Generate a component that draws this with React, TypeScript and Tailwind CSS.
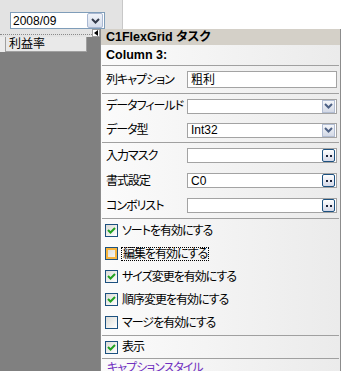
import React from "react";

const F = "font-['Liberation_Sans','Noto_Sans_CJK_JP',sans-serif] [font-feature-settings:'palt']";

function Sep() {
  return <div className="mx-[1px] h-px shrink-0 bg-[#a0a0a0]" />;
}

function Chevron({ color = "#4d6185" }: { color?: string }) {
  return (
    <svg width="9" height="6" viewBox="0 0 9 6">
      <path d="M1 1 L4.5 4.5 L8 1" stroke={color} strokeWidth="2" fill="none" />
    </svg>
  );
}

function DropBtn() {
  return (
    <div className="flex h-[13px] w-[13px] items-center justify-center border border-[#b2bdd2] bg-gradient-to-b from-[#f4f6fa] to-[#d3d9e6]">
      <Chevron />
    </div>
  );
}

function EllBtn() {
  return (
    <div className="flex h-[13px] w-[13px] items-center justify-center gap-[2px] rounded-[2px] border border-[#1c5180] bg-gradient-to-b from-white to-[#d5d9e8]">
      <span className="h-[2px] w-[2px] bg-[#1a2238]" />
      <span className="h-[2px] w-[2px] bg-[#1a2238]" />
    </div>
  );
}

function Field({ text, btn }: { text?: string; btn?: "drop" | "ell" }) {
  return (
    <div className="flex h-[15px] w-[150px] items-center justify-between border border-[#a3a3a3] bg-white pl-[3px] pr-[1px]">
      <span className="text-[12px] leading-none text-black">{text}</span>
      {btn === "drop" && <DropBtn />}
      {btn === "ell" && <EllBtn />}
    </div>
  );
}

function Row({ label, h, children }: { label: string; h: string; children: React.ReactNode }) {
  return (
    <div className={`flex shrink-0 items-center ${h}`}>
      <div className="w-[86px] whitespace-nowrap pl-[5px] text-[12px] leading-none tracking-[-1px] text-black">{label}</div>
      {children}
    </div>
  );
}

function Check({ state }: { state: "on" | "off" | "hover" }) {
  return (
    <div className="flex h-[13px] w-[13px] shrink-0 items-center justify-center border border-[#1c5180] bg-gradient-to-br from-[#dcdcd7] to-white">
      {state === "on" && (
        <svg width="9" height="9" viewBox="0 0 9 9">
          <path d="M1 4 L3.5 6.5 L8 2" stroke="#21a121" strokeWidth="2" fill="none" />
        </svg>
      )}
      {state === "hover" && (
        <div className="h-[11px] w-[11px] border-2 border-[#f7b43c] bg-gradient-to-br from-[#e0e0da] to-[#f4f4f0]" />
      )}
    </div>
  );
}

function CheckRow({ label, state, focus, h }: { label: string; state: "on" | "off" | "hover"; focus?: boolean; h: string }) {
  return (
    <div className={`flex shrink-0 items-center pl-[4px] ${h}`}>
      <Check state={state} />
      <span
        className={
          focus
            ? "ml-[3px] whitespace-nowrap border border-dotted border-black px-[1px] text-[12px] leading-[12px] tracking-[-1px] text-black"
            : "ml-[4px] whitespace-nowrap text-[12px] leading-none tracking-[-1px] text-black"
        }
      >
        {label}
      </span>
    </div>
  );
}

export default function App() {
  return (
    <div className={`relative flex h-[371px] w-[354px] overflow-hidden bg-white ${F}`}>
      {/* left form area */}
      <div className="flex h-full w-[123px] flex-col border-r border-[#c8c8c8] bg-[#808080]">
        <div className="flex h-[37px] flex-col bg-[#e3e3e3]">
          <div className="ml-[10px] mt-[12px] flex h-[17px] w-[95px] items-center justify-between border border-[#7f9db9] bg-white pl-[2px] pr-[1px]">
            <span className="text-[12px] leading-none text-black">2008/09</span>
            <div className="flex h-[15px] w-[16px] items-center justify-center rounded-[2px] border border-[#a9b8d2] bg-gradient-to-b from-[#f0f3f9] to-[#d6deec]">
              <Chevron color="#333a4a" />
            </div>
          </div>
          <div className="flex h-[8px] items-center">
            <div className="mt-[2px] h-px w-[92px] border-t border-dotted border-[#8a8a8a]" />
            <div className="flex h-[8px] w-[8px] items-center justify-center border border-[#9a9a9a] bg-white">
              <svg width="4" height="6" viewBox="0 0 4 6">
                <path d="M4 0 L0 3 L4 6 Z" fill="#000" />
              </svg>
            </div>
          </div>
        </div>
        <div className="flex h-[15px]">
          <div className="w-[6px] border-r border-[#a0a0a0] bg-[#ececec]" />
          <div className="flex w-[81px] items-center border-r border-b border-[#a0a0a0] bg-[#e9e9e9] pl-[3px] text-[12px] leading-none text-black">
            利益率
          </div>
        </div>
      </div>

      {/* smart tag panel */}
      <div className="absolute left-[100px] top-[29px] flex h-[360px] w-[241px] flex-col border-x border-[#8c8c8c] bg-gradient-to-r from-[#fbfbfb] to-[#ebebeb]">
        <div className="flex h-[16px] shrink-0 items-center bg-[#d4d0c8] pl-[5px] text-[12.5px] font-bold leading-none text-black">
          C1FlexGrid タスク
        </div>
        <div className="flex h-[20px] shrink-0 items-center pl-[5px] text-[12.5px] font-bold leading-none text-black">
          Column 3:
        </div>
        <Sep />
        <Row label="列キャプション" h="h-[27px]">
          <div className="flex h-[17px] w-[150px] items-center border border-[#a3a3a3] bg-white pl-[3px] text-[12px] leading-none text-black">
            粗利
          </div>
        </Row>
        <Sep />
        <Row label="データフィールド" h="h-[24px]">
          <Field btn="drop" />
        </Row>
        <Row label="データ型" h="h-[24px]">
          <Field text="Int32" btn="drop" />
        </Row>
        <Sep />
        <Row label="入力マスク" h="h-[25px]">
          <Field btn="ell" />
        </Row>
        <Row label="書式設定" h="h-[25px]">
          <Field text="C0" btn="ell" />
        </Row>
        <Row label="コンボリスト" h="h-[25px]">
          <Field btn="ell" />
        </Row>
        <Sep />
        <CheckRow label="ソートを有効にする" state="on" h="h-[23px]" />
        <CheckRow label="編集を有効にする" state="hover" focus h="h-[23px]" />
        <CheckRow label="サイズ変更を有効にする" state="on" h="h-[23px]" />
        <CheckRow label="順序変更を有効にする" state="on" h="h-[23px]" />
        <CheckRow label="マージを有効にする" state="off" h="h-[23px]" />
        <div className="h-[1px] shrink-0" />
        <Sep />
        <CheckRow label="表示" state="on" h="h-[22px]" />
        <Sep />
        <div className="flex h-[18px] shrink-0 items-center pl-[6px] text-[12px] leading-none tracking-[-1px] text-[#7030c0] underline">
          キャプションスタイル
        </div>
      </div>
    </div>
  );
}
